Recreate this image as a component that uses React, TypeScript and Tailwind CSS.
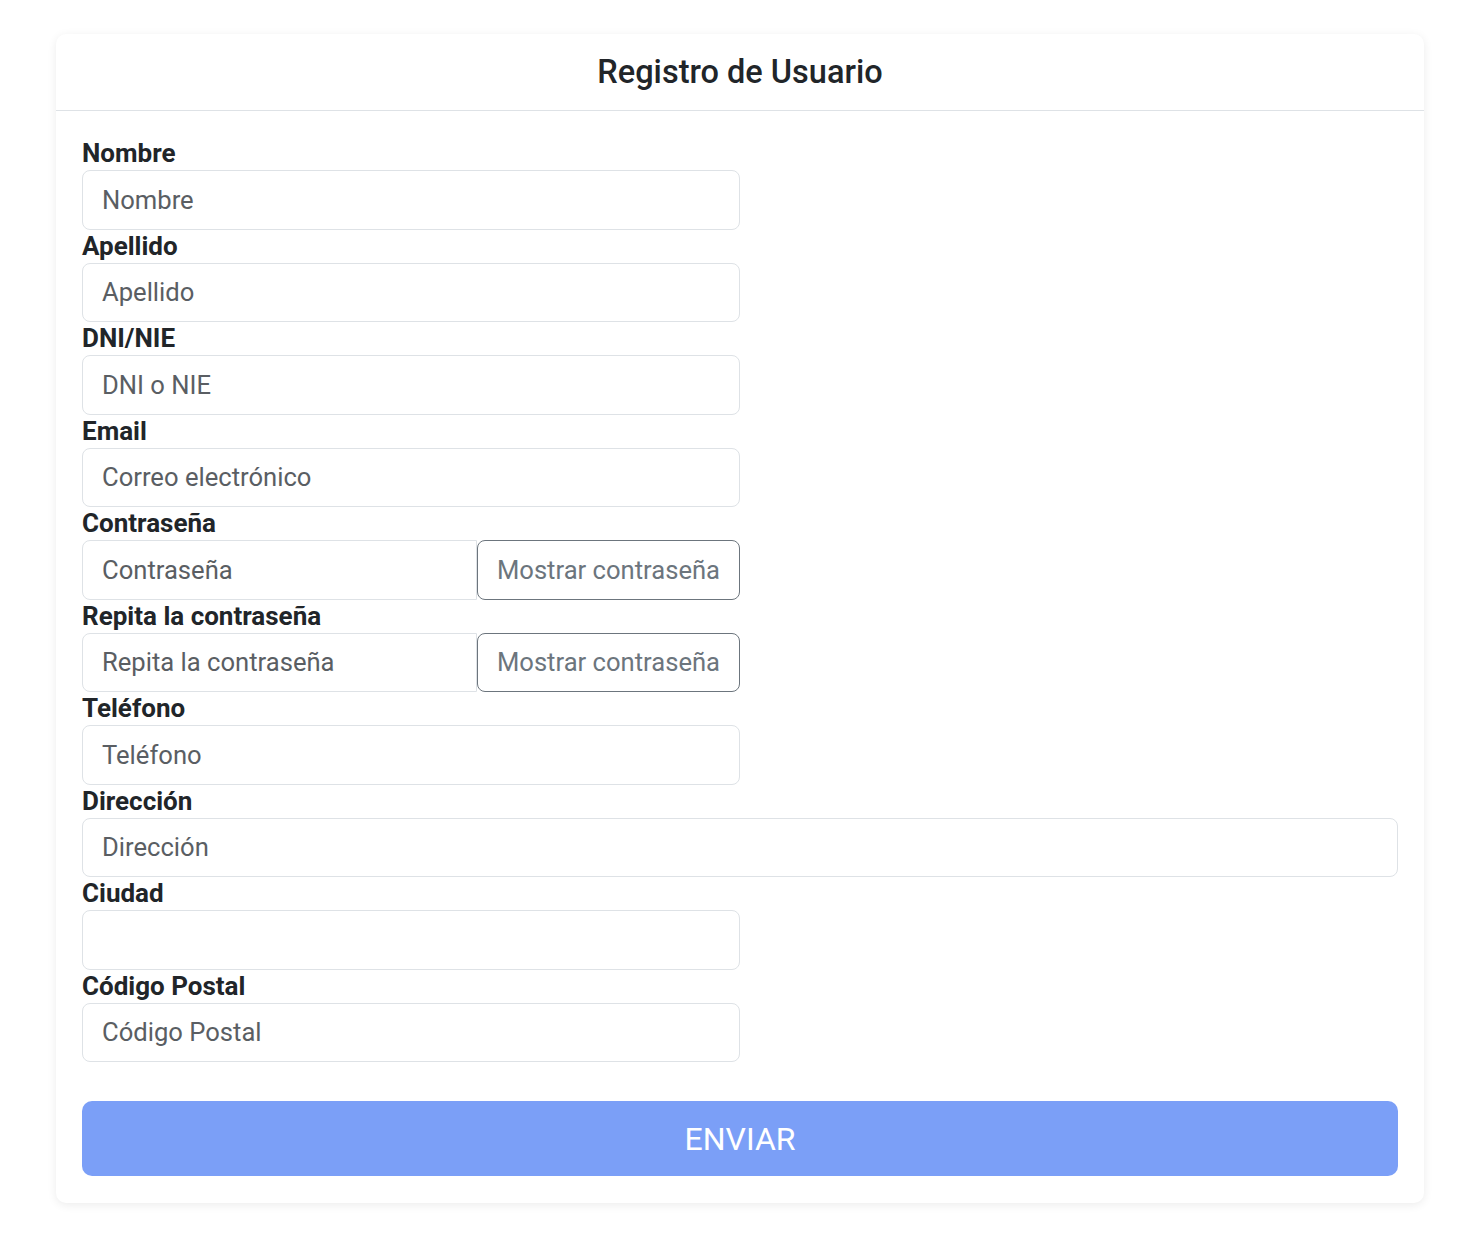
interface FieldProps {
  label: string;
  placeholder?: string;
  full?: boolean;
  toggle?: boolean;
}

function Field({ label, placeholder = "", full = false, toggle = false }: FieldProps) {
  return (
    <div className="flex flex-col">
      <label className="h-[33px] text-[26px] font-bold leading-[33px] text-[#212529]">
        {label}
      </label>
      {toggle ? (
        <div className="flex w-[658px]">
          <input
            type="password"
            placeholder={placeholder}
            className="h-[59.5px] w-[395px] min-w-0 rounded-l-[8px] border border-[#dee2e6] px-[19px] text-[25.6px] text-[#212529] outline-none placeholder:text-[#5a5e63]"
          />
          <button className="h-[59.5px] flex-1 whitespace-nowrap rounded-[8px] border border-[#6c757d] px-0 text-[25.6px] text-[#6c757d]">
            Mostrar contraseña
          </button>
        </div>
      ) : (
        <input
          placeholder={placeholder}
          className={`h-[59.5px] rounded-[8px] border border-[#dee2e6] px-[19px] text-[25.6px] text-[#212529] outline-none placeholder:text-[#5a5e63] ${
            full ? "w-full" : "w-[658px]"
          }`}
        />
      )}
    </div>
  );
}

export default function App() {
  return (
    <div className="min-h-[1250px] bg-white pt-[34px] pl-[56px] font-['Roboto',sans-serif]">
      <div className="w-[1368px] rounded-[10px] bg-white shadow-[0_2px_10px_rgba(0,0,0,0.08)]">
        <div className="flex h-[77px] items-center justify-center border-b border-[#dee2e6]">
          <h1 className="text-[32.5px] font-medium text-[#212529]">Registro de Usuario</h1>
        </div>
        <form className="px-[26px] pt-[26px] pb-[27px]">
          <Field label="Nombre" placeholder="Nombre" />
          <Field label="Apellido" placeholder="Apellido" />
          <Field label="DNI/NIE" placeholder="DNI o NIE" />
          <Field label="Email" placeholder="Correo electrónico" />
          <Field label="Contraseña" placeholder="Contraseña" toggle />
          <Field label="Repita la contraseña" placeholder="Repita la contraseña" toggle />
          <Field label="Teléfono" placeholder="Teléfono" />
          <Field label="Dirección" placeholder="Dirección" full />
          <Field label="Ciudad" />
          <Field label="Código Postal" placeholder="Código Postal" />
          <button
            type="button"
            className="mt-[39px] h-[75px] w-full rounded-[10px] bg-[#7b9ff7] text-[32px] text-white"
          >
            ENVIAR
          </button>
        </form>
      </div>
    </div>
  );
}
